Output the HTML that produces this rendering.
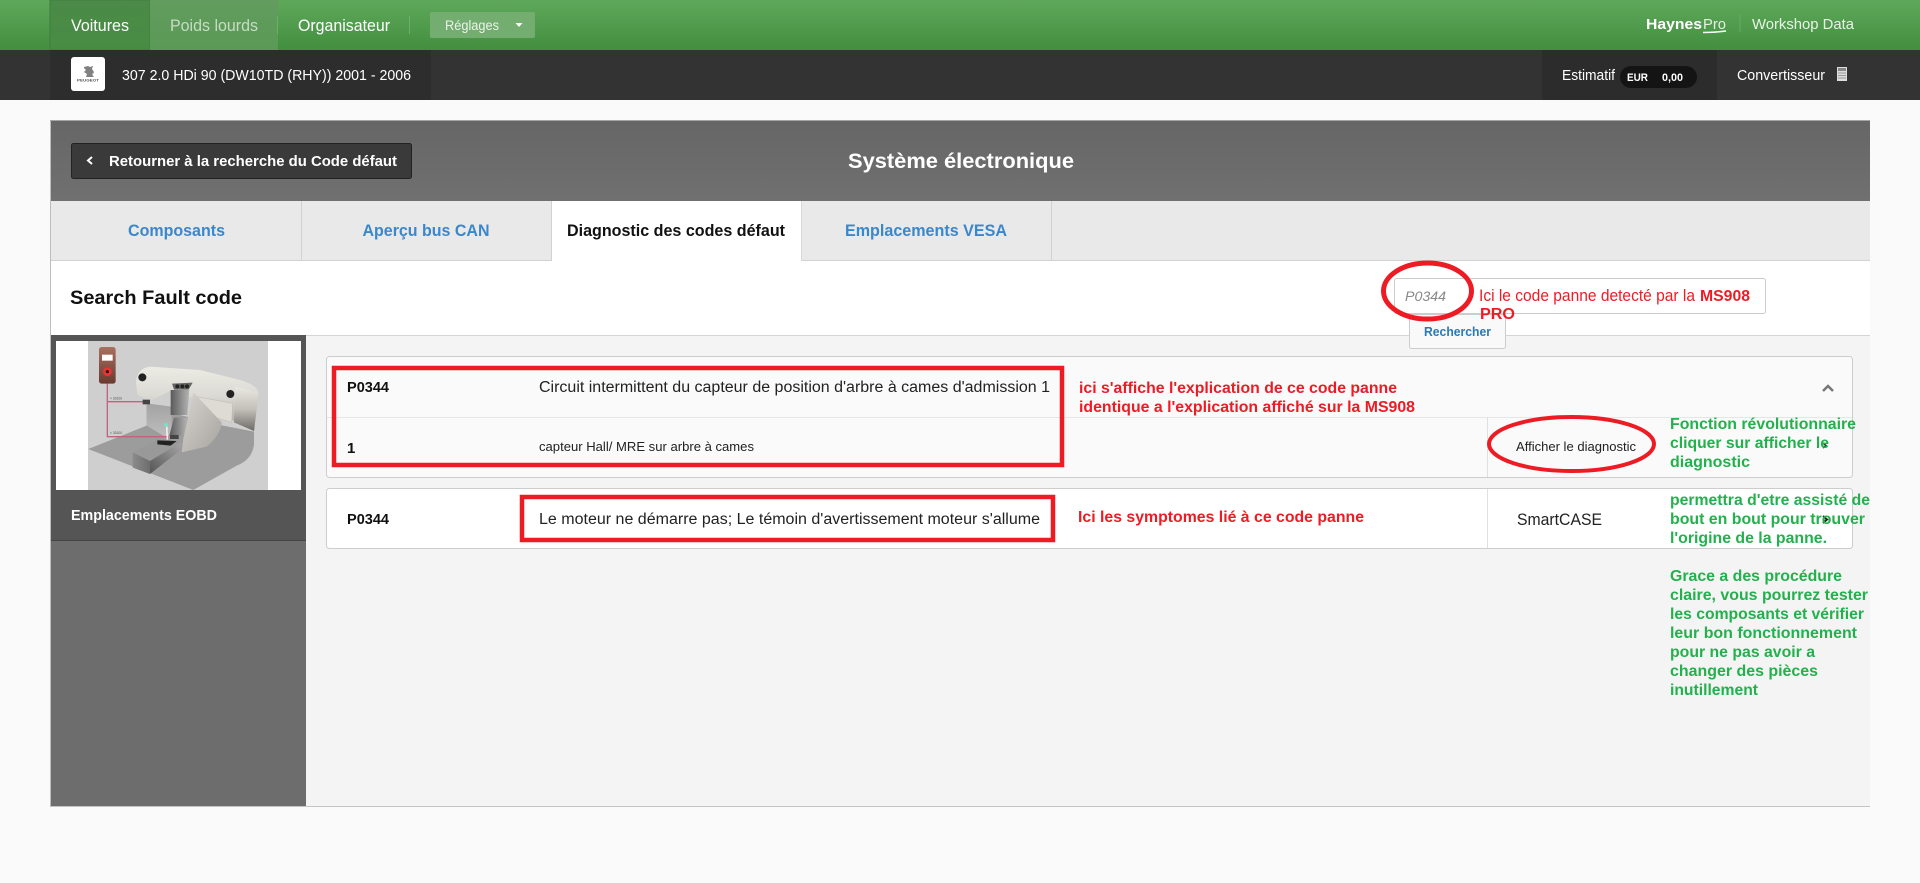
<!DOCTYPE html>
<html lang="fr"><head><meta charset="utf-8"><title>Système électronique</title>
<style>
html,body{margin:0;padding:0;background:#fafafa;width:1920px;height:883px;overflow:hidden}
svg{display:block;position:absolute;left:0;top:0}
text{font-family:"Liberation Sans",sans-serif;white-space:pre}
.b{font-weight:bold}
.g{fill:#22b14c;font-weight:bold;font-size:15.5px}
.r{fill:#ed1c24;font-weight:bold;font-size:16px}
</style></head><body>
<svg width="1920" height="883" viewBox="0 0 1920 883" xmlns="http://www.w3.org/2000/svg">
<defs>
<linearGradient id="gr" x1="0" y1="0" x2="0" y2="1"><stop offset="0" stop-color="#5fa85b"/><stop offset="1" stop-color="#428f3f"/></linearGradient>
<linearGradient id="act" x1="0" y1="0" x2="0" y2="1"><stop offset="0" stop-color="#4b8a48"/><stop offset="1" stop-color="#488c44"/></linearGradient>
<linearGradient id="pl" x1="0" y1="0" x2="0" y2="1"><stop offset="0" stop-color="#629c5e"/><stop offset="1" stop-color="#5a9a56"/></linearGradient>
<linearGradient id="hd" x1="0" y1="0" x2="0" y2="1"><stop offset="0" stop-color="#666"/><stop offset="1" stop-color="#707070"/></linearGradient>
<linearGradient id="dash" x1="0" y1="0" x2="0" y2="1"><stop offset="0" stop-color="#ecebe4"/><stop offset=".45" stop-color="#dcdad4"/><stop offset="1" stop-color="#a5a19c"/></linearGradient>
<linearGradient id="dashr" x1="0" y1="0" x2="0" y2="1"><stop offset="0" stop-color="#e9e8e1"/><stop offset=".5" stop-color="#c4c1bb"/><stop offset="1" stop-color="#6d6a66"/></linearGradient>
<linearGradient id="col" x1="0" y1="0" x2="1" y2="1"><stop offset="0" stop-color="#d8d5d0"/><stop offset="1" stop-color="#a7a39f"/></linearGradient>
<linearGradient id="tun" x1="0" y1="0" x2="1" y2="0"><stop offset="0" stop-color="#5a5a5a"/><stop offset="1" stop-color="#b5b5b5"/></linearGradient>
<linearGradient id="wall" x1="0" y1="0" x2="0" y2="1"><stop offset="0" stop-color="#a3a3a3"/><stop offset="1" stop-color="#bdbdbd"/></linearGradient>
<linearGradient id="cl" x1="0" y1="0" x2="1" y2="0"><stop offset="0" stop-color="#8b8b8b"/><stop offset="1" stop-color="#6d6d6d"/></linearGradient>
<linearGradient id="cr" x1="0" y1="1" x2="1" y2="0"><stop offset="0" stop-color="#555"/><stop offset="1" stop-color="#a5a5a5"/></linearGradient>
<linearGradient id="dev" x1="0" y1="0" x2="0" y2="1"><stop offset="0" stop-color="#a8705f"/><stop offset="1" stop-color="#6a3a30"/></linearGradient>
</defs>

<!-- top bar -->
<rect x="0" y="0" width="1920" height="50" fill="url(#gr)"/>
<rect x="50" y="0" width="100" height="50" fill="url(#act)" stroke="#3f7d3c" stroke-width="1"/>
<rect x="150" y="0" width="128" height="50" fill="url(#pl)"/>
<rect x="409" y="16" width="1" height="18" fill="#6eae6a"/>
<rect x="277" y="16" width="1" height="18" fill="#6eae6a"/>
<rect x="430" y="12" width="105" height="26" rx="2" fill="#74ad70"/>
<text x="71" y="31" font-size="16.500" fill="#fff" textLength="58" lengthAdjust="spacingAndGlyphs">Voitures</text>
<text x="170" y="31" font-size="16.500" fill="#c6dcc4" textLength="88" lengthAdjust="spacingAndGlyphs">Poids lourds</text>
<text x="298" y="31" font-size="16.500" fill="#fff" textLength="92" lengthAdjust="spacingAndGlyphs">Organisateur</text>
<text x="445" y="30" font-size="13.500" fill="#eaf3e9" textLength="54" lengthAdjust="spacingAndGlyphs">Réglages</text>
<path d="M515.500 23h7l-3.500 4z" fill="#fff"/>
<text x="1646" y="29" font-size="15" class="b" fill="#fff" textLength="56" lengthAdjust="spacingAndGlyphs">Haynes</text>
<text x="1703" y="29" font-size="15" fill="#e4f0e3" textLength="23" lengthAdjust="spacingAndGlyphs">Pro</text>
<path d="M1703 32.500q12 0 23-1.500" stroke="#fff" stroke-width="1.500" fill="none"/>
<rect x="1739.500" y="14" width="1" height="18" fill="#68aa64"/>
<text x="1752" y="29" font-size="15" fill="#e9f3e8" textLength="102" lengthAdjust="spacingAndGlyphs">Workshop Data</text>

<!-- dark bar -->
<rect x="0" y="50" width="1920" height="50" fill="#333"/>
<rect x="50" y="50" width="381" height="50" fill="#2d2d2d"/>
<rect x="1542" y="50" width="175" height="50" fill="#2c2c2c"/>
<rect x="71" y="57" width="34" height="34" rx="3" fill="#fff"/>
<path d="M84 67l4-1 2 1 3-1-1 3 2 3-1 2-1-1 1 3 1 1h-8l1-3-3-2 2-2-2-2z" fill="#808080"/>
<text x="77" y="81.500" font-size="4" class="b" fill="#555" textLength="22" lengthAdjust="spacingAndGlyphs">PEUGEOT</text>
<text x="122" y="80" font-size="14.500" fill="#fff" textLength="289" lengthAdjust="spacingAndGlyphs">307 2.0 HDi 90 (DW10TD (RHY)) 2001 - 2006</text>
<text x="1562" y="80" font-size="14.500" fill="#fff" textLength="53" lengthAdjust="spacingAndGlyphs">Estimatif</text>
<rect x="1620" y="66" width="77" height="22" rx="11" fill="#141414"/>
<text x="1627" y="81" font-size="11" class="b" fill="#fff" textLength="21" lengthAdjust="spacingAndGlyphs">EUR</text>
<text x="1662" y="81" font-size="11" class="b" fill="#fff" textLength="21" lengthAdjust="spacingAndGlyphs">0,00</text>
<text x="1737" y="80" font-size="14.500" fill="#fff" textLength="88" lengthAdjust="spacingAndGlyphs">Convertisseur</text>
<rect x="1837" y="67" width="10" height="14" fill="#ddd"/>
<rect x="1838" y="68" width="8" height="3" fill="#888"/>
<path d="M1838 73h8M1838 75.500h8M1838 78h8" stroke="#999" stroke-width="1"/>

<!-- panel -->
<rect x="50" y="120" width="1820" height="687" fill="#f4f4f4"/>
<rect x="50" y="806" width="1820" height="1" fill="#c4c4c4"/>
<rect x="50" y="120" width="1" height="687" fill="#bdbdbd"/>
<rect x="51" y="120" width="1819" height="81" fill="url(#hd)"/>
<rect x="50" y="120" width="1820" height="1" fill="#a5a5a5"/>
<rect x="71.500" y="143.500" width="340" height="35" rx="2" fill="#3a3a3a" stroke="#222"/>
<path d="M92 157l-4 3.500 4 3.500" stroke="#fff" stroke-width="2" fill="none"/>
<text x="109" y="166" font-size="14.500" class="b" fill="#fff" textLength="288" lengthAdjust="spacingAndGlyphs">Retourner à la recherche du Code défaut</text>
<text x="961" y="168" font-size="21" class="b" fill="#fff" text-anchor="middle" textLength="226" lengthAdjust="spacingAndGlyphs">Système électronique</text>

<!-- tabs -->
<rect x="51" y="201" width="1819" height="60" fill="#e9e9e9"/>
<rect x="51" y="260" width="1819" height="1" fill="#d2d2d2"/>
<rect x="301" y="201" width="1" height="60" fill="#d2d2d2"/>
<rect x="1051" y="201" width="1" height="60" fill="#d2d2d2"/>
<rect x="551" y="201" width="251" height="60" fill="#fff"/>
<rect x="551" y="201" width="1" height="60" fill="#d2d2d2"/>
<rect x="801" y="201" width="1" height="60" fill="#d8d8d8"/>
<text x="176.500" y="236" font-size="16.500" class="b" fill="#3a87cc" text-anchor="middle" textLength="97" lengthAdjust="spacingAndGlyphs">Composants</text>
<text x="426" y="236" font-size="16.500" class="b" fill="#3a87cc" text-anchor="middle" textLength="127" lengthAdjust="spacingAndGlyphs">Aperçu bus CAN</text>
<text x="567" y="236" font-size="16.500" class="b" fill="#111" textLength="218" lengthAdjust="spacingAndGlyphs">Diagnostic des codes défaut</text>
<text x="926" y="236" font-size="16.500" class="b" fill="#3a87cc" text-anchor="middle" textLength="162" lengthAdjust="spacingAndGlyphs">Emplacements VESA</text>

<!-- search row -->
<rect x="51" y="261" width="1819" height="74" fill="#fff"/>
<rect x="51" y="335" width="1819" height="1" fill="#d4d4d4"/>
<text x="70" y="304" font-size="19.500" class="b" fill="#111" textLength="172" lengthAdjust="spacingAndGlyphs">Search Fault code</text>
<rect x="1394.500" y="278.500" width="371" height="35" rx="2" fill="#fff" stroke="#ccc"/>
<rect x="1409.500" y="314.500" width="96" height="34" rx="2" fill="#f9f9f9" stroke="#ccc"/>
<text x="1405" y="301" font-size="14" font-style="italic" fill="#888" textLength="41" lengthAdjust="spacingAndGlyphs">P0344</text>
<text x="1424" y="336" font-size="13" class="b" fill="#2a7ab5" textLength="67" lengthAdjust="spacingAndGlyphs">Rechercher</text>

<!-- sidebar -->
<rect x="51" y="335" width="255" height="471" fill="#6d6d6d"/>
<rect x="51" y="335" width="255" height="205" fill="#555"/>
<rect x="51" y="540" width="255" height="1" fill="#444"/>
<rect x="56" y="341" width="245" height="149" fill="#fff"/>
<rect x="88" y="341" width="180" height="149" fill="#cfcfcf"/>
<g transform="translate(50 335) scale(.33333)">
  <path d="M115 342L290 272V215L510 270 612 290V330Q605 375 560 392L430 465z" fill="#9c9c9c"/>
  <path d="M290 205L365 215V300L345 305 290 272z" fill="url(#wall)"/>
  <path d="M258 140Q262 100 300 95L450 105 570 135Q620 150 626 172L612 288 560 262 430 190 365 165 300 200 262 178z" fill="url(#dash)"/>
  <path d="M440 185L548 205 545 262 470 240Q445 225 440 185z" fill="#dedbd5" stroke="#bcb9b3" stroke-width="1.500"/>
  <path d="M555 155L626 172 612 288 552 262z" fill="url(#dashr)"/>
  <path d="M430 172L515 262Q512 300 470 335L395 352 400 310z" fill="url(#col)"/>
  <path d="M362 165H418L412 240H362z" fill="url(#tun)"/>
  <path d="M372 248H412L402 302H358z" fill="url(#tun)"/>
  <path d="M366 146L428 143 416 164H372z" fill="#666"/>
  <circle cx="382" cy="154" r="6" fill="#222"/><circle cx="397" cy="154" r="6" fill="#222"/><circle cx="411" cy="154" r="6" fill="#222"/>
  <circle cx="277" cy="127" r="12" fill="#222"/><circle cx="541" cy="177" r="12" fill="#222"/>
  <path d="M248 352L325 312 392 322 300 378z" fill="#999"/>
  <path d="M322 316L380 318 362 332 322 328z" fill="#222"/>
  <path d="M248 352L300 378V417L248 398z" fill="url(#cl)"/>
  <path d="M300 378L392 322V345L300 417z" fill="url(#cr)"/>
  <path d="M350 270L352 314" stroke="#eee" stroke-width="5"/><circle cx="348" cy="270" r="6" fill="#7fdcc6"/>
  <path d="M172 145V305H350M172 200H280" stroke="#c6607f" stroke-width="4" fill="none"/>
  <rect x="278" y="194" width="22" height="14" fill="#444"/>
  <rect x="360" y="300" width="26" height="12" fill="#444"/>
  <text x="180" y="194" font-size="10" fill="#555">× 30100</text>
  <text x="180" y="297" font-size="10" fill="#555">× 30100</text>
  <rect x="147" y="36" width="50" height="110" rx="8" fill="url(#dev)"/>
  <rect x="156" y="59" width="32" height="18" fill="#fff"/>
  <circle cx="172" cy="110" r="13" fill="#e33"/><circle cx="172" cy="110" r="5" fill="#222"/>
</g>
<text x="71" y="520" font-size="15" class="b" fill="#fff" textLength="146" lengthAdjust="spacingAndGlyphs">Emplacements EOBD</text>

<!-- card 1 -->
<rect x="326.500" y="356.500" width="1526" height="121" rx="3" fill="#fafafa" stroke="#cdcdcd"/>
<rect x="327" y="417" width="1525" height="1" fill="#e6e6e6"/>
<rect x="1487" y="417" width="1" height="60" fill="#e0e0e0"/>
<text x="347" y="392" font-size="15" class="b" fill="#111" textLength="42" lengthAdjust="spacingAndGlyphs">P0344</text>
<text x="539" y="392" font-size="15.500" fill="#222" textLength="511" lengthAdjust="spacingAndGlyphs">Circuit intermittent du capteur de position d'arbre à cames d'admission 1</text>
<text x="347" y="453" font-size="15" class="b" fill="#111">1</text>
<text x="539" y="451" font-size="12.500" fill="#222" textLength="215" lengthAdjust="spacingAndGlyphs">capteur Hall/ MRE sur arbre à cames</text>
<text x="1516" y="451" font-size="12.500" fill="#222" textLength="120" lengthAdjust="spacingAndGlyphs">Afficher le diagnostic</text>
<path d="M1823 391l5-5 5 5" stroke="#777" stroke-width="2.500" fill="none"/>
<path d="M1823 443l3 2.500-3 2.500" stroke="#333" stroke-width="1.500" fill="none"/>

<!-- card 2 -->
<rect x="326.500" y="488.500" width="1526" height="60" rx="3" fill="#fff" stroke="#cdcdcd"/>
<rect x="1487" y="489" width="1" height="59" fill="#e0e0e0"/>
<text x="347" y="524" font-size="15" class="b" fill="#111" textLength="42" lengthAdjust="spacingAndGlyphs">P0344</text>
<text x="539" y="524" font-size="15.500" fill="#222" textLength="501" lengthAdjust="spacingAndGlyphs">Le moteur ne démarre pas; Le témoin d'avertissement moteur s'allume</text>
<text x="1517" y="525" font-size="16.500" fill="#222" textLength="85" lengthAdjust="spacingAndGlyphs">SmartCASE</text>
<path d="M1823 516l4 3.500-4 3.500" stroke="#222" stroke-width="2" fill="none"/>

<!-- annotations -->
<rect x="334" y="368" width="728" height="97" fill="none" stroke="#ed1c24" stroke-width="4.500"/>
<rect x="522" y="497" width="531" height="43" fill="none" stroke="#ed1c24" stroke-width="4.500"/>
<ellipse cx="1427.500" cy="291" rx="44" ry="28" fill="none" stroke="#ed1c24" stroke-width="5"/>
<ellipse cx="1571.500" cy="444" rx="82.500" ry="27" fill="none" stroke="#ed1c24" stroke-width="4"/>
<text x="1479" y="301" font-size="16.500" fill="#ed1c24" textLength="216" lengthAdjust="spacingAndGlyphs">Ici le code panne detecté par la</text>
<text x="1700" y="301" class="r" textLength="50" lengthAdjust="spacingAndGlyphs">MS908</text>
<text x="1480" y="319" class="r" textLength="35" lengthAdjust="spacingAndGlyphs">PRO</text>
<text x="1079" y="393" class="r" textLength="318" lengthAdjust="spacingAndGlyphs">ici s'affiche l'explication de ce code panne</text>
<text x="1079" y="412" class="r" textLength="336" lengthAdjust="spacingAndGlyphs">identique a l'explication affiché sur la MS908</text>
<text x="1078" y="522" class="r" textLength="286" lengthAdjust="spacingAndGlyphs">Ici les symptomes lié à ce code panne</text>

<text x="1670" y="429" class="g" textLength="186" lengthAdjust="spacingAndGlyphs">Fonction révolutionnaire</text>
<text x="1670" y="448" class="g" textLength="159" lengthAdjust="spacingAndGlyphs">cliquer sur afficher le</text>
<text x="1670" y="467" class="g" textLength="80" lengthAdjust="spacingAndGlyphs">diagnostic</text>
<text x="1670" y="505" class="g" textLength="200" lengthAdjust="spacingAndGlyphs">permettra d'etre assisté de</text>
<text x="1670" y="524" class="g" textLength="195" lengthAdjust="spacingAndGlyphs">bout en bout pour trouver</text>
<text x="1670" y="543" class="g" textLength="157" lengthAdjust="spacingAndGlyphs">l'origine de la panne.</text>
<text x="1670" y="581" class="g" textLength="172" lengthAdjust="spacingAndGlyphs">Grace a des procédure</text>
<text x="1670" y="600" class="g" textLength="198" lengthAdjust="spacingAndGlyphs">claire, vous pourrez tester</text>
<text x="1670" y="619" class="g" textLength="194" lengthAdjust="spacingAndGlyphs">les composants et vérifier</text>
<text x="1670" y="638" class="g" textLength="187" lengthAdjust="spacingAndGlyphs">leur bon fonctionnement</text>
<text x="1670" y="657" class="g" textLength="145" lengthAdjust="spacingAndGlyphs">pour ne pas avoir a</text>
<text x="1670" y="676" class="g" textLength="148" lengthAdjust="spacingAndGlyphs">changer des pièces</text>
<text x="1670" y="695" class="g" textLength="88" lengthAdjust="spacingAndGlyphs">inutillement</text>
</svg>
</body></html>
